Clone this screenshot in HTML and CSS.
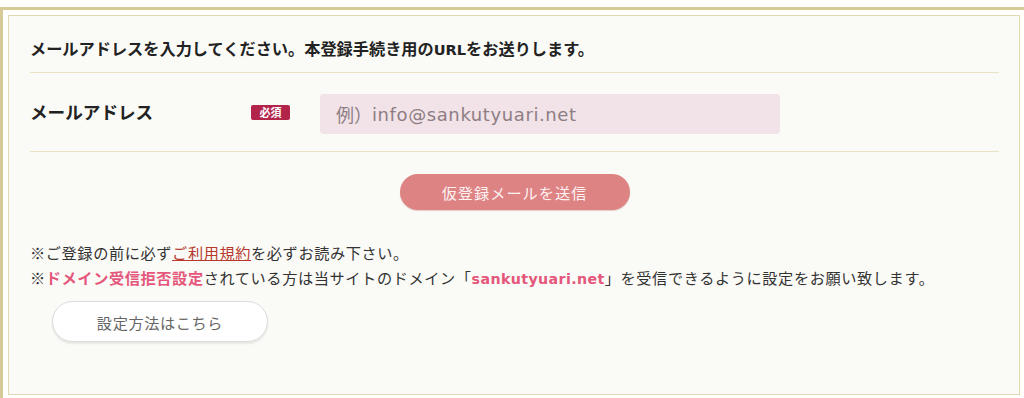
FILE: index.html
```html
<!DOCTYPE html>
<html lang="ja">
<head>
<meta charset="utf-8">
<title>仮登録</title>
<link rel="stylesheet" href="styles.css">
</head>
<body>
<div class="frame">
  <div class="panel">
    <p class="lead">メールアドレスを入力してください。本登録手続き用の<span class="latin">URL</span>をお送りします。</p>
    <div class="row">
      <div class="label">メールアドレス</div>
      <span class="badge">必須</span>
      <div class="input"><span class="ph-cjk">例）</span><span class="ph">info@sankutyuari.net</span></div>
    </div>
    <div class="submit-wrap">
      <button class="submit" type="button">仮登録メールを送信</button>
    </div>
    <div class="notes">
      <p>※ご登録の前に必ず<a class="terms" href="#">ご利用規約</a>を必ずお読み下さい。</p>
      <p>※<strong class="hl">ドメイン受信拒否設定</strong>されている方は当サイトのドメイン「<strong class="hl latin">sankutyuari.net</strong>」を受信できるように設定をお願い致します。</p>
    </div>
    <button class="howto" type="button">設定方法はこちら</button>
  </div>
</div>
</body>
</html>
```

FILE: styles.css
```css
html, body {
  margin: 0;
  padding: 0;
  background: #ffffff;
}
body {
  font-family: "Noto Sans CJK JP", sans-serif;
  color: #333;
}
.frame {
  margin-top: 7px;
  border-top: 3px solid #d6ca97;
  border-left: 3px solid #d6ca97;
  padding: 5px 4px 0 5px;
  height: 391px;
  box-sizing: border-box;
}
.panel {
  border: 1px solid #e0d9b0;
  background: #fafaf6;
  padding: 20px 20px 0 21px;
  height: 380px;
  box-sizing: border-box;
}
.latin {
  font-family: "DejaVu Sans", "Noto Sans CJK JP", sans-serif;
}
.lead {
  margin: 0;
  font-size: 16.2px;
  line-height: 24px;
  font-weight: bold;
  color: #222;
  padding-bottom: 10px;
  border-bottom: 1px solid #e7e3c4;
}
.lead .latin {
  font-size: 14.6px;
}
.row {
  display: flex;
  align-items: center;
  padding: 21px 0 17px;
  border-bottom: 1px solid #e7e3c4;
}
.label {
  width: 221px;
  font-size: 17.6px;
  font-weight: bold;
  color: #222;
  line-height: 24px;
  margin-top: -4px;
}
.badge {
  display: inline-flex;
  align-items: center;
  justify-content: center;
  width: 39px;
  height: 15px;
  border-radius: 2px;
  background: #b3244a;
  color: #fff;
  font-size: 11px;
  font-weight: bold;
  margin-top: -4px;
  margin-right: 30px;
}
.input {
  width: 460px;
  height: 40px;
  box-sizing: border-box;
  border-radius: 4px;
  background: #f1e3e7;
  padding-left: 16px;
  display: flex;
  align-items: center;
  color: #8e7d84;
  font-size: 18px;
}
.ph-cjk {
  font-size: 18px;
}
.ph {
  font-family: "DejaVu Sans", sans-serif;
  font-size: 18px;
  letter-spacing: 0.6px;
}
.submit-wrap {
  display: flex;
  justify-content: center;
  padding-top: 22px;
}
.submit {
  width: 230px;
  height: 36px;
  border: none;
  border-radius: 18px;
  background: #de8384;
  color: #fdf2f2;
  font-family: "Noto Sans CJK JP", sans-serif;
  font-size: 15.2px;
  letter-spacing: 1px;
  padding: 0;
  box-shadow: 0 1px 1px rgba(160, 80, 80, 0.25);
}
.notes {
  margin-top: 30px;
  font-size: 15.2px;
  line-height: 25px;
  letter-spacing: 0.6px;
  color: #333;
}
.notes p {
  margin: 0;
}
.terms {
  color: #b8382c;
  text-decoration: underline;
}
.hl {
  color: #e4577b;
  font-weight: bold;
}
.notes .hl.latin {
  font-size: 14.2px;
  letter-spacing: 0.4px;
}
.howto {
  display: block;
  margin: 9px 0 0 22px;
  width: 216px;
  height: 41px;
  border: 1px solid #dcdcdc;
  border-radius: 21px;
  background: #fff;
  color: #666;
  font-family: "Noto Sans CJK JP", sans-serif;
  font-size: 15.2px;
  letter-spacing: 0.6px;
  padding: 0;
  box-shadow: 0 2px 2px rgba(0, 0, 0, 0.08);
}
```
